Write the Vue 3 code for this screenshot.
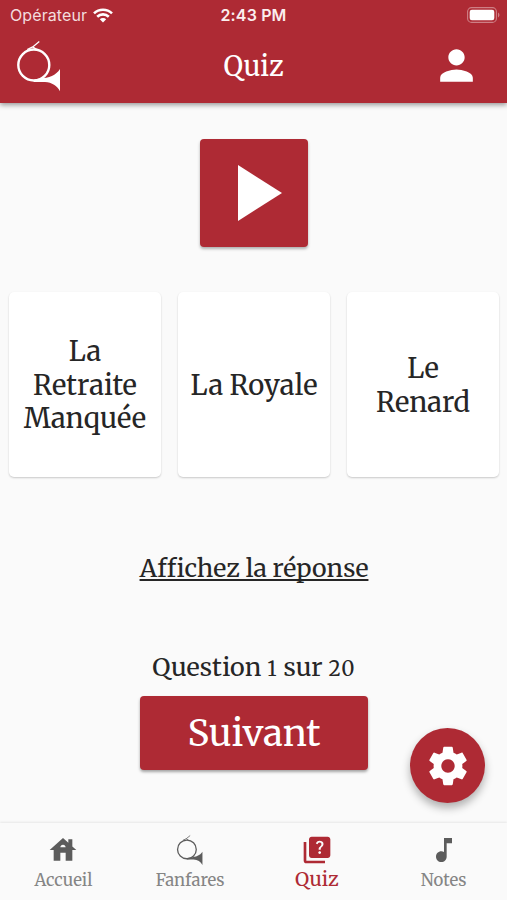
<script setup>
import { ref } from 'vue'

const reponses = ref([
  { id: 1, lignes: ['La', 'Retraite', 'Manquée'] },
  { id: 2, lignes: ['La Royale'] },
  { id: 3, lignes: ['Le', 'Renard'] }
])

const question = ref(1)
const total = 20
const onglet = ref('Quiz')

const onglets = [
  {
    nom: 'Accueil',
    icone: 'M19 9.3V4h-3v2.6L12 3 2 12h3v8h5v-6h4v6h5v-8h3l-3-2.7zm-9 .7c0-1.1.9-2 2-2s2 .9 2 2h-4z'
  },
  { nom: 'Fanfares', icone: null },
  {
    nom: 'Quiz',
    icone:
      'M4 6H2v14c0 1.1.9 2 2 2h14v-2H4V6zM20 2H8c-1.1 0-2 .9-2 2v12c0 1.1.9 2 2 2h12c1.1 0 2-.9 2-2V4c0-1.1-.9-2-2-2zm-5.99 13c-.59 0-1.05-.47-1.05-1.05 0-.59.47-1.04 1.05-1.04.59 0 1.04.45 1.04 1.04-.01.58-.45 1.05-1.04 1.05zm2.5-6.17c-.63.93-1.23 1.21-1.56 1.81-.13.24-.18.4-.18 1.18h-1.52c0-.41-.06-1.08.26-1.65.41-.73 1.18-1.16 1.63-1.8.48-.68.21-1.94-1.14-1.94-.88 0-1.32.67-1.5 1.23l-1.37-.57C11.51 5.96 12.52 5 13.99 5c1.23 0 2.08.56 2.51 1.26.37.61.58 1.73.01 2.57z'
  },
  {
    nom: 'Notes',
    icone: 'M12 3v10.55c-.59-.34-1.27-.55-2-.55-2.21 0-4 1.79-4 4s1.79 4 4 4 4-1.79 4-4V7h4V3h-6z'
  }
]
</script>

<template>
  <div class="app">
    <header class="header">
      <div class="status">
        <div class="operateur">
          <span>Opérateur</span>
          <svg class="wifi" viewBox="0 0 20 15">
            <path d="M1 5.4a13 13 0 0 1 18 0" />
            <path d="M4.2 8.7a8.4 8.4 0 0 1 11.6 0" />
            <path class="plein" d="M10 14.6l3.2-3.3a4.6 4.6 0 0 0-6.4 0z" />
          </svg>
        </div>
        <span class="heure">2:43 PM</span>
        <svg class="batterie" viewBox="0 0 33 16">
          <rect class="contour" x=".6" y=".6" width="28.8" height="14.8" rx="4" />
          <rect x="2.7" y="2.7" width="24.6" height="10.6" rx="2.2" />
          <path class="borne" d="M31 5.6c1.9.8 1.9 4 0 4.8z" />
        </svg>
      </div>
      <div class="barre">
        <svg class="trompe" viewBox="0 0 48 54">
          <circle cx="18.8" cy="26" r="15.5" />
          <path class="embout" d="M24.3 2.6L17.7 7.9l-5.500 2.600M17.7 7.9l4 2.6" />
          <path class="pavillon" d="M25 39.300c9-.2 16-3 20-9.300v22.200c-3-5.500-8-8.900-15-9.300H18.800v-2z" />
        </svg>
        <h1>Quiz</h1>
        <svg class="profil" viewBox="0 0 24 24">
          <path d="M12 12c2.21 0 4-1.79 4-4s-1.79-4-4-4-4 1.79-4 4 1.79 4 4 4zm0 2c-2.67 0-8 1.34-8 4v2h16v-2c0-2.66-5.33-4-8-4z" />
        </svg>
      </div>
    </header>

    <main class="contenu">
      <button class="lecture">
        <svg viewBox="0 0 24 24"><path d="M8 5v14l11-7z" /></svg>
      </button>

      <div class="reponses">
        <div v-for="r in reponses" :key="r.id" class="carte">
          <span v-for="ligne in r.lignes" :key="ligne">{{ ligne }}</span>
        </div>
      </div>

      <a class="solution">Affichez la réponse</a>

      <p class="compteur">
        Question <span class="chiffre">{{ question }}</span> sur <span class="chiffre">{{ total }}</span>
      </p>
      <button class="suivant">Suivant</button>
    </main>

    <button class="reglages">
      <svg viewBox="0 0 24 24">
        <path d="M19.43 12.98c.04-.32.07-.64.07-.98s-.03-.66-.07-.98l2.11-1.65c.19-.15.24-.42.12-.64l-2-3.46c-.12-.22-.39-.3-.61-.22l-2.49 1c-.52-.4-1.08-.73-1.69-.98l-.38-2.65C14.46 2.18 14.25 2 14 2h-4c-.25 0-.46.18-.49.42l-.38 2.65c-.61.25-1.17.59-1.69.98l-2.49-1c-.23-.09-.49 0-.61.22l-2 3.46c-.13.22-.07.49.12.64l2.11 1.65c-.04.32-.07.65-.07.98s.03.66.07.98l-2.11 1.65c-.19.15-.24.42-.12.64l2 3.46c.12.22.39.3.61.22l2.49-1c.52.4 1.08.73 1.69.98l.38 2.65c.03.24.24.42.49.42h4c.25 0 .46-.18.49-.42l.38-2.65c.61-.25 1.17-.59 1.69-.98l2.49 1c.23.09.49 0 .61-.22l2-3.46c.12-.22.07-.49-.12-.64l-2.11-1.65zM12 15.5c-1.93 0-3.5-1.57-3.5-3.5s1.57-3.5 3.5-3.5 3.5 1.57 3.5 3.5-1.57 3.5-3.5 3.5z" />
      </svg>
    </button>

    <nav class="navigation">
      <a v-for="o in onglets" :key="o.nom" class="onglet" :class="{ actif: o.nom === onglet }" @click="onglet = o.nom">
        <svg v-if="o.icone" class="icone" viewBox="0 0 24 24"><path :d="o.icone" /></svg>
        <svg v-else class="icone trompe" viewBox="-2 0 52 54">
          <circle cx="18.8" cy="26" r="15.8" />
          <path class="embout" d="M24.3 2.6L17.7 7.9l-5.500 2.600M17.7 7.9l4 2.6" />
          <path class="pavillon" d="M25 39.300c9-.2 16-3 20-9.300v22.200c-3-5.500-8-8.900-15-9.300H18.800v-2z" />
        </svg>
        <span>{{ o.nom }}</span>
      </a>
    </nav>
  </div>
</template>

<style>
body {
  margin: 0;
}
</style>

<style scoped>
.app {
  position: relative;
  display: flex;
  flex-direction: column;
  height: 900px;
  overflow: hidden;
  background: #fafafa;
  color: #262626;
  font-family: Merriweather, 'DejaVu Serif Condensed', 'DejaVu Serif', serif;
}

button {
  display: flex;
  align-items: center;
  justify-content: center;
  padding: 0;
  border: none;
  background: #ae2a34;
  color: #fff;
  font-family: inherit;
}

svg {
  display: block;
  fill: currentColor;
}

/* En-tête */
.header {
  height: 103px;
  flex: none;
  background: #ae2a34;
  color: #fff;
  box-shadow: 0 2px 5px rgba(0, 0, 0, 0.4);
}

.status {
  display: grid;
  grid-template-columns: 1fr auto 1fr;
  align-items: center;
  height: 30px;
  padding: 0 7px 0 10px;
  font-family: Inter, sans-serif;
  font-size: 16px;
}

.operateur {
  display: flex;
  align-items: center;
  gap: 6px;
  color: #f3dcde;
  letter-spacing: 0.1px;
}

.wifi {
  width: 20px;
  height: 15px;
  fill: none;
  stroke: #fff;
  stroke-width: 2.6;
}

.wifi .plein {
  fill: #fff;
  stroke: none;
}

.heure {
  margin-right: 3px;
  font-weight: 600;
  letter-spacing: 0.15px;
  color: #fbeeee;
}

.batterie {
  justify-self: end;
  width: 33px;
  height: 16px;
}

.contour {
  fill: none;
  stroke: rgba(255, 255, 255, 0.4);
  stroke-width: 1.1;
}

.borne {
  opacity: 0.4;
}

.barre {
  display: grid;
  grid-template-columns: 1fr auto 1fr;
  align-items: center;
  height: 71px;
  padding: 0 15px;
}

.barre .trompe {
  width: 48px;
  height: 54px;
}

.trompe circle,
.trompe .embout {
  fill: none;
  stroke: currentColor;
  stroke-width: 2.4;
}

.trompe .embout {
  stroke-width: 1.3;
}

.barre h1 {
  margin: 0;
  font-size: 27px;
  font-weight: 400;
}

.profil {
  justify-self: end;
  width: 49px;
  height: 49px;
  margin-right: 11px;
}

/* Contenu */
.contenu {
  flex: 1;
  display: flex;
  flex-direction: column;
  align-items: center;
  padding: 36px 8px 0 9px;
}

.lecture {
  width: 108px;
  height: 108px;
  border-radius: 4px;
  box-shadow: 0 2px 3px rgba(0, 0, 0, 0.3);
}

.lecture svg {
  width: 96px;
  height: 96px;
}

.reponses {
  display: grid;
  grid-template-columns: repeat(3, 1fr);
  gap: 17px;
  width: 100%;
  height: 185px;
  margin-top: 45px;
}

.carte {
  display: flex;
  flex-direction: column;
  align-items: center;
  justify-content: center;
  padding-top: 2px;
  border-radius: 5px;
  background: #fff;
  box-shadow: 0 1px 2px rgba(0, 0, 0, 0.2);
  font-size: 27.4px;
  line-height: 33.5px;
  white-space: nowrap;
}

.solution {
  margin-top: 75px;
  font-size: 24.9px;
  line-height: 32px;
  text-decoration: underline;
  text-decoration-thickness: 1.5px;
  text-underline-offset: 2px;
  text-decoration-skip-ink: none;
  white-space: nowrap;
}

.compteur {
  margin: 67px 0 0;
  font-size: 25.1px;
  line-height: 32px;
  white-space: nowrap;
}

/* Chiffres à hauteur de minuscule */
.chiffre {
  font-size: 0.82em;
  line-height: 1;
  letter-spacing: 1px;
}

.suivant {
  width: 228px;
  height: 74px;
  margin-top: 13px;
  border-radius: 4px;
  box-shadow: 0 2px 3px rgba(0, 0, 0, 0.35);
  font-size: 36.5px;
}

.reglages {
  position: absolute;
  right: 22px;
  bottom: 97px;
  width: 75px;
  height: 75px;
  border-radius: 50%;
  box-shadow: 0 5px 9px rgba(0, 0, 0, 0.3);
}

.reglages svg {
  width: 46px;
  height: 46px;
}

/* Navigation */
.navigation {
  position: relative;
  display: grid;
  grid-template-columns: repeat(4, 1fr);
  flex: none;
  height: 77px;
  background: #fafafa;
  box-shadow: 0 -1px 2px rgba(0, 0, 0, 0.08);
}

.onglet {
  display: flex;
  flex-direction: column;
  align-items: center;
  padding-top: 11px;
  color: #858585;
  font-size: 16.7px;
  line-height: 24px;
}

.icone {
  width: 32px;
  height: 32px;
  margin-bottom: 3px;
  color: #5c5c5c;
}

.icone.trompe circle {
  stroke-width: 2.2;
}

.actif,
.actif .icone {
  color: #ae2a34;
}

.actif {
  font-size: 19.6px;
}

.actif .icone {
  margin-bottom: 1px;
}
</style>
